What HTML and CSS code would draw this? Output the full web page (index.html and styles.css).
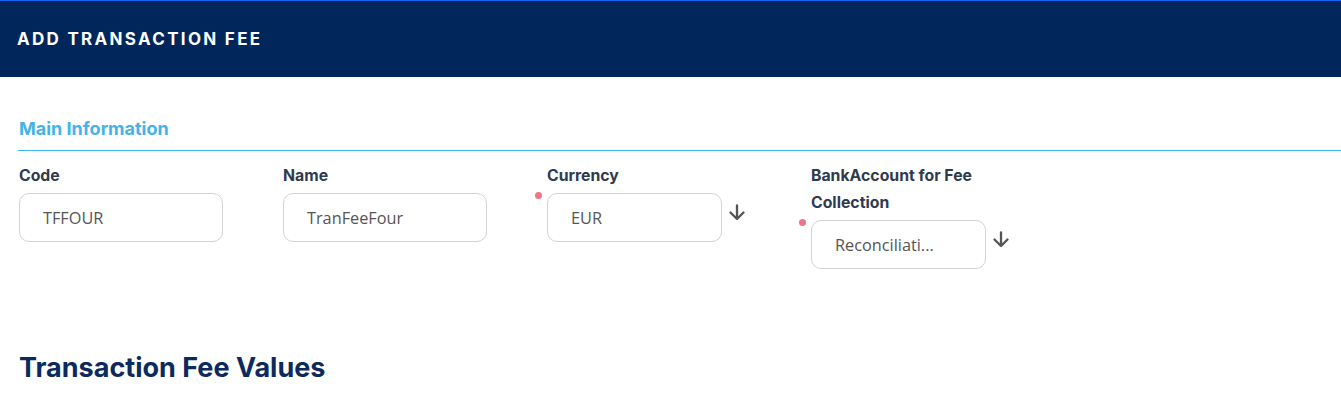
FILE: index.html
```html
<!DOCTYPE html>
<html lang="en">
<head>
    <meta charset="UTF-8">
    <title>Add Transaction Fee</title>
    <meta name="viewport" content="width=device-width, initial-scale=1">
<link rel="stylesheet" href="styles.css">
</head>
<body>
    <div class="fee-page">
        <div class="fee-page__header">
            <div class="fee-page__header__title">Add Transaction Fee</div>
        </div>
        <div class="fee-page__section">
            <div class="fee-page__section__title">Main Information</div>
            <div class="fee-page__fields">
                <div class="fee-page__field">
                    <div class="fee-page__field__label">Code</div>
                    <div class="fee-page__field__control">
                        <div class="fee-page__field__input fee-page__field__input--wide">TFFOUR</div>
                    </div>
                </div>
                <div class="fee-page__field">
                    <div class="fee-page__field__label">Name</div>
                    <div class="fee-page__field__control">
                        <div class="fee-page__field__input fee-page__field__input--wide">TranFeeFour</div>
                    </div>
                </div>
                <div class="fee-page__field">
                    <div class="fee-page__field__label">Currency</div>
                    <div class="fee-page__field__control fee-page__field__control--required">
                        <div class="fee-page__field__input">EUR</div>
                        <svg class="fee-page__field__arrow" viewBox="0 0 18 18" width="18" height="18">
                            <path d="M9 2.5v13M2.5 9.5l6.5 6.5 6.5-6.5" fill="none" stroke="#555" stroke-width="2.3" stroke-linecap="round" stroke-linejoin="round"/>
                        </svg>
                    </div>
                </div>
                <div class="fee-page__field">
                    <div class="fee-page__field__label">BankAccount for Fee Collection</div>
                    <div class="fee-page__field__control fee-page__field__control--required">
                        <div class="fee-page__field__input">Reconciliati...</div>
                        <svg class="fee-page__field__arrow" viewBox="0 0 18 18" width="18" height="18">
                            <path d="M9 2.5v13M2.5 9.5l6.5 6.5 6.5-6.5" fill="none" stroke="#555" stroke-width="2.3" stroke-linecap="round" stroke-linejoin="round"/>
                        </svg>
                    </div>
                </div>
            </div>
        </div>
        <div class="fee-page__values">
            <h2 class="fee-page__values__title">Transaction Fee Values</h2>
        </div>
    </div>
</body>
</html>
```

FILE: styles.css
```css
* {
    margin: 0;
    padding: 0;
    box-sizing: border-box;
}
body {
    font: 14px/21px Inter, "Liberation Sans", sans-serif;
    background: #fff;
    color: #2f3a4e;
}
.fee-page__header {
    border-top: 1px solid #1463f3;
    background: #00265c;
    height: 77px;
    padding: 0 17px;
    display: flex;
    align-items: center;
}
.fee-page__header__title {
    color: #fff;
    font-size: 17px;
    font-weight: 700;
    letter-spacing: 2.3px;
    text-transform: uppercase;
}
.fee-page__section {
    padding-left: 19px;
}
.fee-page__section__title {
    color: #45b3e8;
    font-size: 18px;
    font-weight: 700;
    line-height: 24px;
    padding: 40px 0 9px 1px;
    margin-left: -1px;
    border-bottom: 1px solid #3db5ef;
}
.fee-page__fields {
    display: flex;
    padding-top: 11px;
}
.fee-page__field {
    width: 264px;
}
.fee-page__field__label {
    width: 175px;
    font-size: 15.8px;
    font-weight: 700;
    line-height: 27px;
    color: #2f3a4e;
    margin-bottom: 4px;
}
.fee-page__field__control {
    position: relative;
    display: flex;
    align-items: flex-start;
}
.fee-page__field__control--required::before {
    content: "";
    position: absolute;
    left: -12px;
    top: -1px;
    width: 7px;
    height: 7px;
    border-radius: 50%;
    background: #f27385;
}
.fee-page__field__input {
    width: 175px;
    height: 49px;
    border: 1px solid #d3d3d3;
    border-radius: 10px;
    padding: 2px 0 0 23px;
    font: 16.3px/49px "Open Sans", "Noto Sans", sans-serif;
    color: #555;
    display: flex;
    align-items: center;
}
.fee-page__field__input--wide {
    width: 204px;
}
.fee-page__field__arrow {
    margin: 10px 0 0 6px;
}
.fee-page__values {
    padding: 82px 19px 0;
}
.fee-page__values__title {
    color: #0c2a5e;
    font-size: 27px;
    font-weight: 700;
    line-height: 34px;
}
```
